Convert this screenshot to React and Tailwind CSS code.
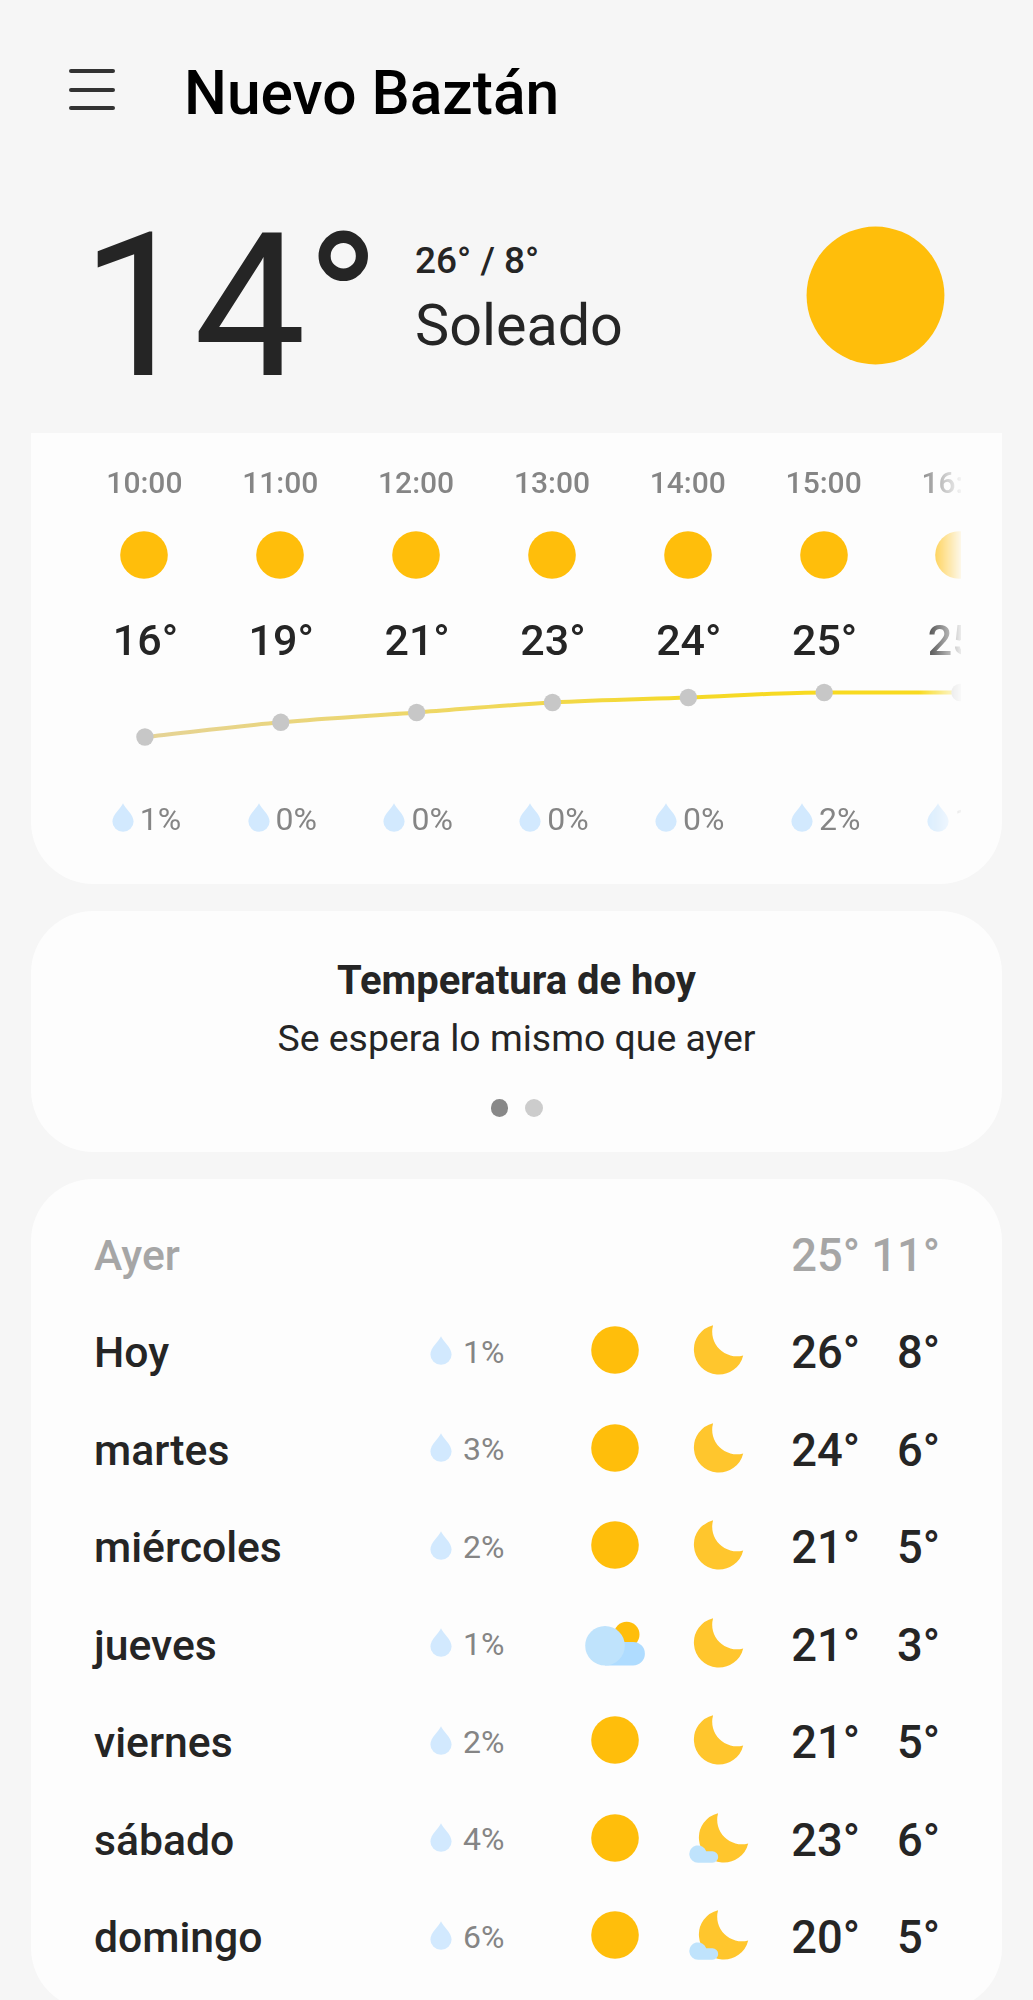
import React from "react";

const HOURS = [
  { time: "10:00", temp: 16, rain: 1, y: 55 },
  { time: "11:00", temp: 19, rain: 0, y: 40.3 },
  { time: "12:00", temp: 21, rain: 0, y: 30.5 },
  { time: "13:00", temp: 23, rain: 0, y: 20.5 },
  { time: "14:00", temp: 24, rain: 0, y: 15.5 },
  { time: "15:00", temp: 25, rain: 2, y: 10.5 },
  { time: "16:00", temp: 25, rain: 1, y: 10.5 },
];

const DAYS = [
  { name: "Hoy", rain: 1, day: "sun", night: "moon", max: 26, min: 8 },
  { name: "martes", rain: 3, day: "sun", night: "moon", max: 24, min: 6 },
  { name: "miércoles", rain: 2, day: "sun", night: "moon", max: 21, min: 5 },
  { name: "jueves", rain: 1, day: "cloudSun", night: "moon", max: 21, min: 3 },
  { name: "viernes", rain: 2, day: "sun", night: "moon", max: 21, min: 5 },
  { name: "sábado", rain: 4, day: "sun", night: "cloudMoon", max: 23, min: 6 },
  { name: "domingo", rain: 6, day: "sun", night: "cloudMoon", max: 20, min: 5 },
];

const COL = 135.85;

const Sun = ({ className = "size-12" }) => (
  <svg viewBox="0 0 48 48" className={className}>
    <circle cx="24" cy="24" r="23.8" fill="#ffbe0b" />
  </svg>
);

const Drop = () => (
  <svg viewBox="0 0 22 29" className="mb-[3px] h-[29px] w-[22px] shrink-0">
    <path
      d="M11 0.2 C12.6 4.6 21.6 11.6 21.6 18.4 A10.6 10.4 0 0 1 0.4 18.4 C0.4 11.6 9.4 4.6 11 0.2 Z"
      fill="#d2e9fe"
    />
  </svg>
);

const MOON = "M19.3 0.2 A24.5 24.5 0 0 0 49.4 30.4 A25 25 0 1 1 19.3 0.2 Z";

const Moon = () => (
  <svg viewBox="0 0 60 50" className="h-[50px] w-[60px]">
    <path d={MOON} transform="translate(4.8 0)" fill="#ffc62d" />
  </svg>
);

const CloudMoon = () => (
  <svg viewBox="0 0 60 50" className="h-[50px] w-[60px]">
    <path d={MOON} transform="translate(9.8 0)" fill="#ffc62d" />
    <path
      d="M9 49.8 A8.7 8.7 0 1 1 17.2 38.2 H23.4 A5.8 5.8 0 0 1 23.4 49.8 Z"
      fill="#bfe3fc"
    />
  </svg>
);

const CloudSun = () => (
  <svg viewBox="0 0 60 48" className="h-12 w-[60px]">
    <circle cx="41.7" cy="15.5" r="12.8" fill="#ffbe0b" />
    <path d="M20 22.9 H48.1 A11.8 11.8 0 0 1 48.1 46.5 H20 Z" fill="#afdcff" />
    <circle cx="20" cy="26.7" r="19.8" fill="#bfe3fc" />
  </svg>
);

const ICONS = { sun: Sun, moon: Moon, cloudSun: CloudSun, cloudMoon: CloudMoon };

function HourlyChart() {
  const points = HOURS.map((h, i) => ({ x: COL / 2 + i * COL, y: h.y }));
  const line = points
    .map((p, i) => {
      if (i === 0) return `M${p.x} ${p.y}`;
      const prev = points[i - 1];
      const slopeAt = (n) => {
        const a = points[Math.max(n - 1, 0)];
        const b = points[Math.min(n + 1, points.length - 1)];
        return n === 5 ? 0 : (b.y - a.y) / (b.x - a.x);
      };
      const d = COL / 3;
      return `C${prev.x + d} ${prev.y + slopeAt(i - 1) * d} ${p.x - d} ${p.y - slopeAt(i) * d} ${p.x} ${p.y}`;
    })
    .join(" ");

  return (
    <svg viewBox="0 0 951 66" className="mt-[16px] h-[66px] w-[951px]">
      <defs>
        <linearGradient id="warm" gradientUnits="userSpaceOnUse" x1="68" y1="0" x2="750" y2="0">
          <stop offset="0" stopColor="#e5d397" />
          <stop offset="0.5" stopColor="#f0d85c" />
          <stop offset="0.8" stopColor="#f5d928" />
          <stop offset="1" stopColor="#f8da20" />
        </linearGradient>
      </defs>
      <path d={line} fill="none" stroke="url(#warm)" strokeWidth="4" />
      {points.map((p) => (
        <circle key={p.x} cx={p.x} cy={p.y} r="8.7" fill="#c7c7c7" />
      ))}
    </svg>
  );
}

function Hourly() {
  return (
    <section className="h-[451px] rounded-b-[62px] bg-[#fdfdfd] pr-[41px] pl-[45.5px]">
      <div className="h-full overflow-hidden [mask-image:linear-gradient(to_right,black_calc(100%-42px),rgb(0_0_0/0.08))]">
        <div className="flex w-[951px] pt-8">
          {HOURS.map((h) => (
            <div key={h.time} className="flex w-[135.85px] shrink-0 flex-col items-center">
              <span className="text-[30px] leading-9 font-medium text-[#858585]">{h.time}</span>
              <Sun className="mt-[30px] size-12" />
              <span className="mt-[35px] pl-[2px] text-[43px] leading-[52px] font-medium">{h.temp}°</span>
            </div>
          ))}
        </div>
        <HourlyChart />
        <div className="mt-[52px] flex w-[951px]">
          {HOURS.map((h) => (
            <div key={h.time} className="flex w-[135.85px] shrink-0 items-center justify-center gap-1.5 pl-1">
              <Drop />
              <span className="text-[32px] leading-[38px] text-[#858585]">{h.rain}%</span>
            </div>
          ))}
        </div>
      </div>
    </section>
  );
}

function DayRow({ name, rain, day, night, max, min }) {
  const DayIcon = ICONS[day];
  const NightIcon = ICONS[night];
  return (
    <li className="flex h-[97.5px] items-center">
      <span className="w-[336px] pt-[3px] text-[42.7px]">{name}</span>
      <div className="flex w-[145px] items-center gap-[11px] pt-0.5">
        <Drop />
        <span className="text-[32px] font-normal text-[#858585]">{rain}%</span>
      </div>
      <div className="flex w-20 justify-center pb-px">
        <DayIcon />
      </div>
      <div className="flex w-[127px] justify-center pb-px">
        <NightIcon />
      </div>
      <span className="w-[78px] pt-[5px] text-right text-[45.3px]">{max}°</span>
      <span className="w-[80px] pt-[5px] text-right text-[45.3px]">{min}°</span>
    </li>
  );
}

export default function App() {
  return (
    <div className="h-[2000px] w-[1033px] overflow-hidden bg-[#f6f6f6] font-['Roboto',sans-serif] text-[#252525]">
      <header className="flex h-[182px] items-center pl-[69px]">
        <button className="mb-[3px] flex w-[46px] flex-col gap-[14.5px]" aria-label="Menú">
          <span className="h-1 rounded-full bg-[#333]" />
          <span className="h-1 rounded-full bg-[#333]" />
          <span className="h-1 rounded-full bg-[#333]" />
        </button>
        <h1 className="mt-[5px] ml-[69px] text-[60.5px] leading-[72px] font-medium text-black">Nuevo Baztán</h1>
      </header>

      <section className="flex h-[251px] pr-[88px] pl-[81px]">
        <div className="mt-[7px] w-[334px] text-[200px] leading-[236px]">14°</div>
        <div className="mt-[57px]">
          <p className="text-[37px] leading-[44px] font-medium">26° / 8°</p>
          <p className="mt-[10px] text-[57.5px] leading-[66px]">Soleado</p>
        </div>
        <Sun className="mt-11 ml-auto size-[139px]" />
      </section>

      <main className="flex flex-col gap-[27px] pr-[31px] pl-[31px]">
        <Hourly />

        <section className="flex h-[241px] flex-col items-center rounded-[62px] bg-[#fdfdfd] pt-[46px]">
          <h2 className="text-[40px] leading-[48px] font-bold">Temperatura de hoy</h2>
          <p className="mt-[11px] text-[37.4px] leading-[44px]">Se espera lo mismo que ayer</p>
          <div className="mt-[39px] flex gap-[17px]">
            <span className="size-[17.5px] rounded-full bg-[#888]" />
            <span className="size-[17.5px] rounded-full bg-[#ccc]" />
          </div>
        </section>

        <section className="h-[831px] shrink-0 rounded-[62px] bg-[#fdfdfd] pt-[25.5px] pl-[63px] font-medium">
          <div className="flex h-[97.5px] items-center text-[#a6a6a6]">
            <span className="w-[688px] pt-[3px] text-[42.7px]">Ayer</span>
            <span className="w-[78px] pt-[5px] text-right text-[45.3px]">25°</span>
            <span className="w-[80px] pt-[5px] text-right text-[45.3px]">11°</span>
          </div>
          <ul>
            {DAYS.map((d) => (
              <DayRow key={d.name} {...d} />
            ))}
          </ul>
        </section>
      </main>
    </div>
  );
}
